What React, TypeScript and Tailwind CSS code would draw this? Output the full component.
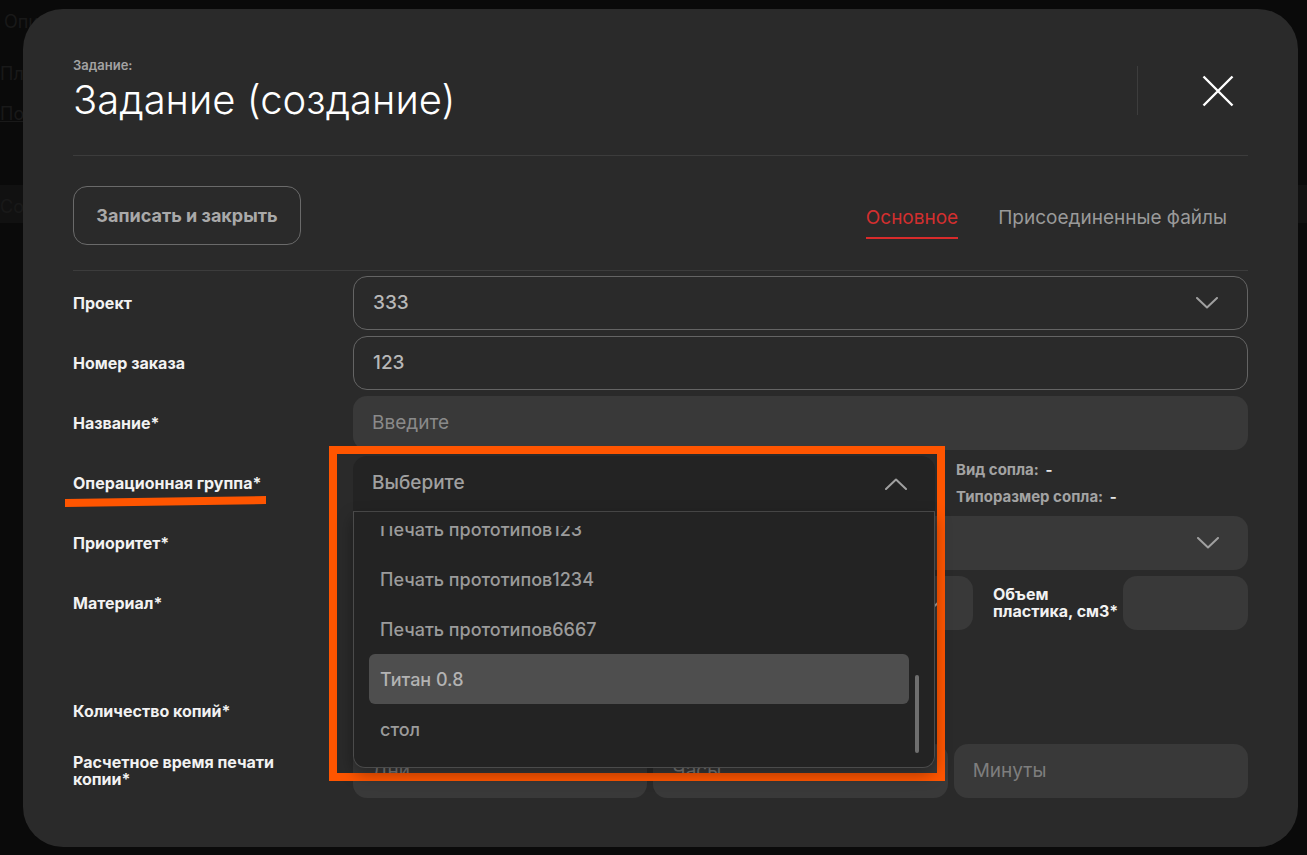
import React from 'react';

const Chevron: React.FC<{ up?: boolean }> = ({ up = false }) => (
  <svg width="22" height="12" viewBox="0 0 22 12" fill="none" className="shrink-0">
    <path
      d={up ? 'M1 11L11 1.5L21 11' : 'M1 1L11 10.5L21 1'}
      stroke="#a0a0a0"
      strokeWidth="2"
      strokeLinecap="round"
      strokeLinejoin="round"
    />
  </svg>
);

const Label: React.FC<{ children?: React.ReactNode }> = ({ children }) => (
  <div className="flex items-center max-w-[215px] text-[16px] font-bold leading-[17px] text-[#f2f2f2]">
    {children}
  </div>
);

const options = [
  'Печать прототипов',
  'Печать прототипов1',
  'Печать прототипов12',
  'Печать прототипов123',
  'Печать прототипов1234',
  'Печать прототипов6667',
  'Титан 0.8',
  'стол',
];

export default function App() {
  return (
    <div className="relative w-[1307px] h-[855px] overflow-hidden bg-[#0a0a0a] font-['Inter','Noto_Sans',sans-serif]">
      {/* faint page behind the dialog */}
      <div className="flex flex-col text-[18px] text-[#191919]">
        <div className="h-[40px] pt-[8px] pl-[4px]">Описание</div>
        <div className="h-[50px] pt-[20px]">Плановое</div>
        <div className="h-[50px] pt-[10px] underline">Подробнее</div>
        <div className="mt-[45px] h-[38px] bg-[#111111] pt-[8px]">Создать</div>
      </div>

      {/* Dialog */}
      <div className="absolute left-[23px] top-[9px] w-[1275px] h-[838px] rounded-[40px] bg-[#2a2a2a] px-[50px] pt-[48px]">
        {/* Header */}
        <div className="flex items-center justify-between">
          <div>
            <div className="text-[13px] font-semibold leading-[16px] text-[#a3a3a3]">Задание:</div>
            <div className="mt-[3px] text-[40px] font-light leading-[48px] text-white">Задание (создание)</div>
          </div>
          <div className="flex items-center">
            <div className="h-[49px] w-px bg-[#3d3d3d]" />
            <button className="ml-[50px] flex h-[60px] w-[60px] items-center justify-center">
              <svg width="32" height="32" viewBox="0 0 32 32" fill="none">
                <path d="M1.5 1.5L30.5 30.5M30.5 1.5L1.5 30.5" stroke="#ffffff" strokeWidth="2.4" />
              </svg>
            </button>
          </div>
        </div>

        <div className="mt-[31px] h-px bg-[#3c3c3c]" />

        {/* Actions + tabs */}
        <div className="mt-[30px] flex items-start justify-between">
          <button className="h-[59px] w-[228px] rounded-[14px] border border-[#6a6a6a] text-[18px] font-bold text-[#a9a9a9]">
            Записать и закрыть
          </button>
          <div className="flex gap-[40px] pt-[20px] pr-[21px] text-[19px] leading-[24px]">
            <div className="border-b-[2px] border-[#d92b2b] pb-[7px] text-[#d32f2f]">Основное</div>
            <div className="pb-[9px] text-[#9a9a9a]">Присоединенные файлы</div>
          </div>
        </div>

        <div className="mt-[25px] h-px bg-[#3c3c3c]" />

        {/* Form */}
        <div className="mt-[5px] grid grid-cols-[280px_1fr] gap-y-[6px]">
          <Label>Проект</Label>
          <div className="flex h-[54px] items-center justify-between rounded-[14px] border border-[#646464] pl-[19px] pr-[29px] text-[19px] font-medium text-[#b8b8b8]">
            333
            <Chevron />
          </div>

          <Label>Номер заказа</Label>
          <div className="flex h-[54px] items-center rounded-[14px] border border-[#646464] pl-[19px] text-[19px] font-medium text-[#b8b8b8]">
            123
          </div>

          <Label>Название*</Label>
          <div className="flex h-[54px] items-center rounded-[14px] bg-[#393939] pl-[19px] text-[19px] text-[#8a8a8a]">
            Введите
          </div>

          <Label>Операционная группа*</Label>
          <div className="flex h-[54px] items-center">
            <div className="relative z-10 w-[582px] self-start">
              <div className="flex h-[56px] items-center justify-between rounded-t-[14px] border-b border-[#4b4b4b] bg-[#232323] pl-[19px] pr-[28px] text-[19px] font-medium text-[#a0a0a0]">
                Выберите
                <Chevron up />
              </div>
              <div className="absolute left-0 right-0 top-full h-[256px] rounded-b-[12px] border border-t-0 border-[#4b4b4b] bg-[#232323] pt-[14px] shadow-[0_6px_16px_rgba(0,0,0,0.35)]">
                <div className="h-[232px] overflow-hidden">
                  <div className="-mt-[172px] pl-[15px] pr-[25px]">
                    {options.map((o) => (
                      <div
                        key={o}
                        className={`flex h-[50px] items-center rounded-[6px] px-[11px] text-[18px] font-medium ${
                          o === 'Титан 0.8' ? 'bg-[#4e4e4e] text-[#b3b3b3]' : 'text-[#9b9b9b]'
                        }`}
                      >
                        {o}
                      </div>
                    ))}
                  </div>
                </div>
                <div className="absolute right-[15px] top-[163px] h-[78px] w-[4px] rounded-full bg-[#6e6e6e]" />
              </div>
            </div>
            <div className="ml-[21px] flex flex-col gap-[9px] text-[15px] font-bold leading-[18px] text-[#a3a3a3]">
              <div>
                Вид сопла: <span className="ml-[3px] text-[#e6e6e6]">-</span>
              </div>
              <div>
                Типоразмер сопла: <span className="ml-[3px] text-[#e6e6e6]">-</span>
              </div>
            </div>
          </div>

          <Label>Приоритет*</Label>
          <div className="flex h-[54px] items-center justify-end rounded-[14px] bg-[#393939] pr-[29px]">
            <Chevron />
          </div>

          <Label>Материал*</Label>
          <div className="flex h-[54px] items-center">
            <div className="flex h-[54px] w-[620px] items-center justify-end rounded-[14px] bg-[#393939] pr-[29px]">
              <Chevron />
            </div>
            <div className="ml-[20px] w-[130px] text-[16px] font-bold leading-[17px] text-[#f2f2f2]">
              Объем
              <br />
              пластика, см3*
            </div>
            <div className="h-[54px] flex-1 rounded-[14px] bg-[#393939]" />
          </div>

          <div />
          <div className="h-[42px]" />

          <Label>Количество копий*</Label>
          <div className="flex h-[54px] w-[582px] items-center rounded-[14px] bg-[#393939] pl-[19px] text-[19px] text-[#8a8a8a]">
            Введите
          </div>

          <Label>Расчетное время печати копии*</Label>
          <div className="grid grid-cols-3 gap-[6px]">
            {['Дни', 'Часы', 'Минуты'].map((p) => (
              <div
                key={p}
                className="flex h-[54px] items-center rounded-[14px] bg-[#393939] pl-[19px] text-[19px] text-[#7e7e7e]"
              >
                {p}
              </div>
            ))}
          </div>
        </div>
      </div>

      {/* Annotation marks */}
      <div className="absolute left-[329px] top-[446px] h-[335px] w-[616px] border-[8px] border-[#ff5500]" />
      <svg className="absolute left-0 top-0" width="300" height="520" viewBox="0 0 300 520">
        <polygon points="65,499 266,496 266,504 65,507" fill="#ff5500" />
      </svg>
    </div>
  );
}
